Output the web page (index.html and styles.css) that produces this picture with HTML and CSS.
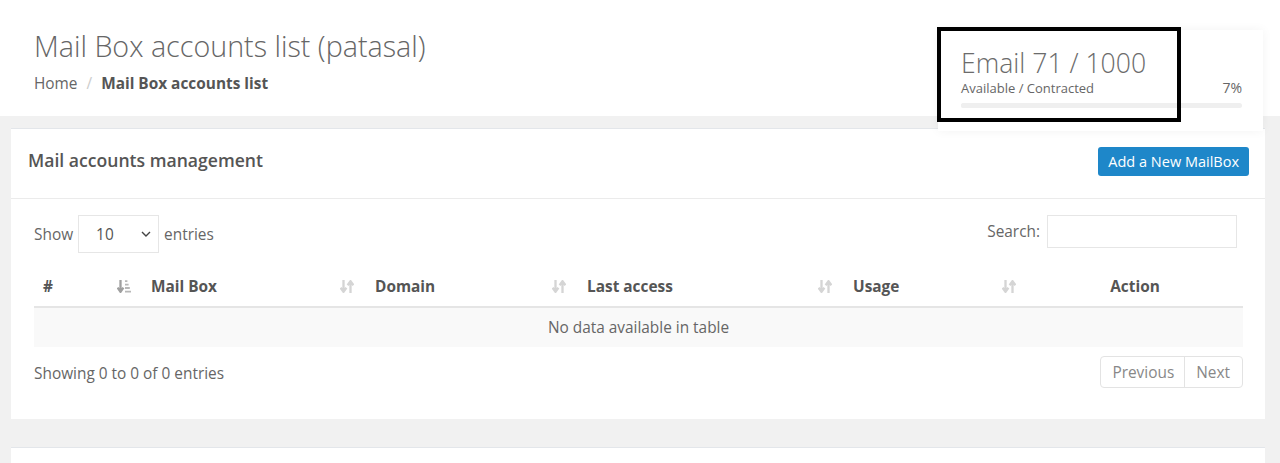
FILE: index.html
```html
<!DOCTYPE html>
<html lang="en">
<head>
<meta charset="utf-8">
<title>Mail Box accounts list</title>
<link rel="stylesheet" href="styles.css">
</head>
<body>
<header class="page-header">
  <h1 class="page-title">Mail Box accounts list (patasal)</h1>
  <nav class="breadcrumb">
    <span class="crumb">Home</span>
    <span class="sep">/</span>
    <span class="crumb current">Mail Box accounts list</span>
  </nav>
  <div class="stat-widget">
    <div class="stat-value">Email 71 / 1000</div>
    <div class="stat-row">
      <span class="stat-label">Available / Contracted</span>
      <span class="stat-pct">7%</span>
    </div>
    <div class="progress"><div class="progress-bar" style="width:7%"></div></div>
  </div>
  <div class="highlight-box"></div>
</header>

<main class="content">
  <section class="card">
    <div class="card-header">
      <h2 class="card-title">Mail accounts management</h2>
      <button class="btn-primary">Add a New MailBox</button>
    </div>
    <div class="card-body">
      <div class="controls">
        <label class="length">Show
          <span class="select">10
            <svg class="chev" viewBox="0 0 10 6" width="10" height="6"><path d="M1 1l4 4 4-4" fill="none" stroke="#444" stroke-width="1.4"/></svg>
          </span>
          entries</label>
        <label class="search">Search: <span class="search-input"></span></label>
      </div>

      <table class="data-table">
        <thead>
          <tr>
            <th class="c-num"><span class="th-in">#
              <svg class="sort active" viewBox="0 0 14 13" width="14" height="13"><path d="M3.5 0v10.5M0.6 7.6L3.5 11.8 6.4 7.6" fill="none" stroke="#a0a0a0" stroke-width="2.3"/><path d="M8 1.2h2.4M8 4.6h3.6M8 8h4.8M8 11.6h6" stroke="#b8b8b8" stroke-width="1.8"/></svg></span></th>
            <th class="c-mail"><span class="th-in">Mail Box
              <svg class="sort" viewBox="0 0 14 13" width="14" height="13"><path d="M3.5 0v11M0.6 7.8l2.9 4L6.4 7.8" fill="none" stroke="#d5d5d5" stroke-width="2.3"/><path d="M10.5 13V2M7.6 5.2l2.9-4 2.9 4" fill="none" stroke="#d5d5d5" stroke-width="2.3"/></svg></span></th>
            <th class="c-domain"><span class="th-in">Domain
              <svg class="sort" viewBox="0 0 14 13" width="14" height="13"><path d="M3.5 0v11M0.6 7.8l2.9 4L6.4 7.8" fill="none" stroke="#d5d5d5" stroke-width="2.3"/><path d="M10.5 13V2M7.6 5.2l2.9-4 2.9 4" fill="none" stroke="#d5d5d5" stroke-width="2.3"/></svg></span></th>
            <th class="c-access"><span class="th-in">Last access
              <svg class="sort" viewBox="0 0 14 13" width="14" height="13"><path d="M3.5 0v11M0.6 7.8l2.9 4L6.4 7.8" fill="none" stroke="#d5d5d5" stroke-width="2.3"/><path d="M10.5 13V2M7.6 5.2l2.9-4 2.9 4" fill="none" stroke="#d5d5d5" stroke-width="2.3"/></svg></span></th>
            <th class="c-usage"><span class="th-in">Usage
              <svg class="sort" viewBox="0 0 14 13" width="14" height="13"><path d="M3.5 0v11M0.6 7.8l2.9 4L6.4 7.8" fill="none" stroke="#d5d5d5" stroke-width="2.3"/><path d="M10.5 13V2M7.6 5.2l2.9-4 2.9 4" fill="none" stroke="#d5d5d5" stroke-width="2.3"/></svg></span></th>
            <th class="c-action">Action</th>
          </tr>
        </thead>
        <tbody>
          <tr><td colspan="6" class="empty">No data available in table</td></tr>
        </tbody>
      </table>

      <div class="table-footer">
        <span class="info">Showing 0 to 0 of 0 entries</span>
        <div class="pager">
          <span class="page-btn">Previous</span>
          <span class="page-btn">Next</span>
        </div>
      </div>
    </div>
  </section>
  <section class="card card-next"></section>
</main>
</body>
</html>
```

FILE: styles.css
```css
* { box-sizing: border-box; }
html, body { margin: 0; padding: 0; }
body {
  font-family: "Open Sans", "Noto Sans", sans-serif;
  color: #666;
  background: #f1f1f1;
  font-size: 15.4px;
  height: 463px;
  overflow: hidden;
}

.page-header {
  position: relative;
  background: #fff;
  height: 116px;
  padding: 28px 34px 0;
}
.page-title {
  margin: 0;
  font-weight: 300;
  font-size: 28.7px;
  line-height: 36px;
  color: #666;
}
.breadcrumb {
  margin-top: 9px;
  line-height: 22px;
  font-size: 15.4px;
  display: flex;
  gap: 9px;
}
.crumb { color: #666; }
.crumb.current { font-weight: 700; color: #555; }
.sep { color: #ccc; }

.stat-widget {
  position: absolute;
  top: 30px;
  right: 17px;
  width: 325px;
  height: 101px;
  background: #fff;
  box-shadow: 0 0 10px rgba(0,0,0,0.05);
  padding: 16px 21px 0 23px;
  z-index: 2;
}
.stat-value {
  font-weight: 300;
  font-size: 26.6px;
  line-height: 34px;
  color: #6b6b6b;
}
.stat-row {
  display: flex;
  justify-content: space-between;
  align-items: baseline;
  line-height: 18px;
  margin-top: -1px;
}
.stat-label { font-size: 13px; color: #666; }
.stat-pct { font-size: 14px; color: #666; }
.progress {
  margin-top: 6px;
  height: 5px;
  border-radius: 3px;
  background: #efefef;
  overflow: hidden;
}
.progress-bar { height: 100%; background: #efefef; }

.highlight-box {
  position: absolute;
  left: 937px;
  top: 27px;
  width: 244px;
  height: 95px;
  border: 4px solid #000;
  z-index: 3;
}

.content {
  padding: 12px 15px 0 11px;
}
.card {
  background: #fff;
  border-top: 1px solid #e3e6ea;
}
.card-header {
  display: flex;
  justify-content: space-between;
  align-items: center;
  padding: 18px 16px 22px 18px;
  border-bottom: 1px solid #ebebeb;
}
.card-title {
  margin: 0;
  font-size: 17.6px;
  font-weight: 600;
  color: #555;
  line-height: 24px;
  position: relative;
  top: -2px;
  left: -1px;
}
.btn-primary {
  font-family: inherit;
  font-size: 14.5px;
  color: #fff;
  background: #1e87c9;
  border: none;
  border-radius: 3px;
  height: 29px;
  padding: 0 10px;
  line-height: 29px;
}

.card-body {
  padding: 16px 22px 31px 23px;
}
.controls {
  display: flex;
  justify-content: space-between;
  align-items: flex-start;
  height: 38px;
}
.length {
  display: flex;
  align-items: center;
  gap: 5px;
  color: #666;
}
.select {
  display: inline-flex;
  align-items: center;
  justify-content: space-between;
  width: 81px;
  height: 38px;
  border: 1px solid #e6e6e6;
  padding: 0 7px 0 17px;
  color: #555;
}
.search {
  display: flex;
  align-items: center;
  gap: 7px;
  margin-right: 6px;
  height: 32px;
}
.search-input {
  display: block;
  width: 190px;
  height: 33px;
  border: 1px solid #e6e6e6;
}

.data-table {
  width: 100%;
  margin-top: 16px;
  border-collapse: collapse;
  table-layout: fixed;
}
.data-table th {
  text-align: left;
  font-weight: 700;
  color: #555;
  height: 38px;
  line-height: 34px;
  padding: 0 11px 2px 10px;
  border-bottom: 2px solid #e5e5e5;
}
.th-in {
  display: flex;
  justify-content: space-between;
  align-items: center;
}
.c-num { width: 107px; }
.data-table th.c-num { padding-left: 9px; padding-right: 10px; }
.c-mail { width: 224px; }
.c-domain { width: 212px; }
.c-access { width: 266px; }
.c-usage { width: 184px; }
.data-table th.c-action { text-align: center; padding: 0 0 2px; }
.sort { display: block; }
.empty {
  background: #f9f9f9;
  height: 39px;
  line-height: 39px;
  text-align: center;
  color: #666;
  padding: 0;
}

.table-footer {
  margin-top: 9px;
  display: flex;
  justify-content: space-between;
  align-items: center;
}
.info { position: relative; top: 1px; }
.pager {
  display: flex;
  border: 1px solid #e3e3e3;
  border-radius: 4px;
  height: 32px;
}
.page-btn {
  display: flex;
  align-items: center;
  padding: 0 10px 0 11px;
  color: #888;
}
.page-btn + .page-btn { border-left: 1px solid #e3e3e3; padding: 0 12px 0 11px; }

.card-next {
  margin-top: 28px;
  height: 16px;
}
```
